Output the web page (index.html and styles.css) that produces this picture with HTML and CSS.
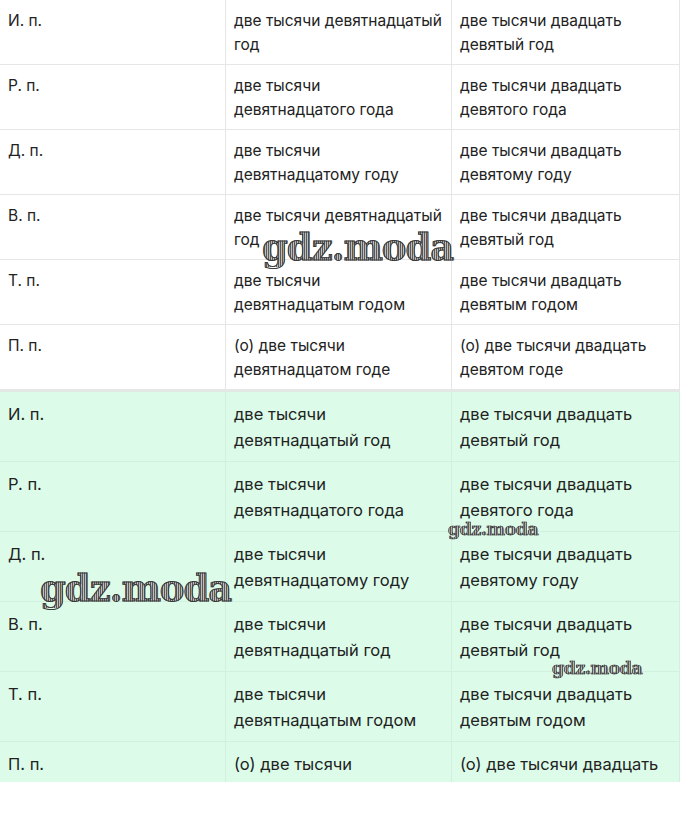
FILE: index.html
```html
<!DOCTYPE html>
<html lang="ru">
<head>
<meta charset="utf-8">
<link rel="stylesheet" href="styles.css">
</head>
<body>
<div class="page">
  <table class="grid plain">
    <tr><td>И. п.</td><td>две тысячи девятнадцатый год</td><td>две тысячи двадцать девятый год</td></tr>
    <tr><td>Р. п.</td><td>две тысячи девятнадцатого года</td><td>две тысячи двадцать девятого года</td></tr>
    <tr><td>Д. п.</td><td>две тысячи девятнадцатому году</td><td>две тысячи двадцать девятому году</td></tr>
    <tr><td>В. п.</td><td>две тысячи девятнадцатый год</td><td>две тысячи двадцать девятый год</td></tr>
    <tr><td>Т. п.</td><td>две тысячи девятнадцатым годом</td><td>две тысячи двадцать девятым годом</td></tr>
    <tr><td>П. п.</td><td>(о) две тысячи девятнадцатом годе</td><td>(о) две тысячи двадцать девятом годе</td></tr>
  </table>
  <table class="grid green">
    <tr><td>И. п.</td><td>две тысячи девятнадцатый год</td><td>две тысячи двадцать девятый год</td></tr>
    <tr><td>Р. п.</td><td>две тысячи девятнадцатого года</td><td>две тысячи двадцать девятого года</td></tr>
    <tr><td>Д. п.</td><td>две тысячи девятнадцатому году</td><td>две тысячи двадцать девятому году</td></tr>
    <tr><td>В. п.</td><td>две тысячи девятнадцатый год</td><td>две тысячи двадцать девятый год</td></tr>
    <tr><td>Т. п.</td><td>две тысячи девятнадцатым годом</td><td>две тысячи двадцать девятым годом</td></tr>
    <tr><td>П. п.</td><td>(о) две тысячи девятнадцатом годе</td><td>(о) две тысячи двадцать девятом годе</td></tr>
  </table>
  <span class="wm wm-big wm-1">gdz.moda</span>
  <span class="wm wm-small wm-2">gdz.moda</span>
  <span class="wm wm-big wm-3">gdz.moda</span>
  <span class="wm wm-small wm-4">gdz.moda</span>
</div>
</body>
</html>
```

FILE: styles.css
```css
html, body {
  margin: 0;
  padding: 0;
  background: #ffffff;
}

.page {
  position: relative;
  width: 680px;
  height: 782px;
  overflow: hidden;
  font-family: Inter, "Noto Sans", sans-serif;
  color: #222222;
}

.grid {
  width: 680px;
  border-collapse: collapse;
  table-layout: fixed;
}

.grid td {
  vertical-align: top;
  text-align: left;
  padding: 9px 8px 7px 8px;
  border: 1px solid #e6e6e6;
}

.grid td:nth-child(1) { width: 209px; }
.grid td:nth-child(2) { width: 209px; }

.plain td {
  font-size: 15.5px;
  line-height: 24px;
  height: 48px;
}

.plain tr:first-child td { border-top: none; }

.green {
  background: #dcfce9;
}

.green td {
  font-size: 16.5px;
  line-height: 26px;
  height: 52px;
  padding: 9px 8px 8px 8px;
  border-color: #d2f0df;
}

.green tr:first-child td { border-top: 2px solid #e3e8e5; }

.plain td:first-child, .green td:first-child { border-left: none; }

.wm {
  position: absolute;
  font-family: "DejaVu Serif", "Liberation Serif", serif;
  font-weight: bold;
  white-space: nowrap;
  color: transparent;
  background: repeating-linear-gradient(90deg, #5a5a5a 0 1px, #bdbdbd 1px 2px);
  -webkit-background-clip: text;
  background-clip: text;
  -webkit-text-stroke: 1px #3a3a3a;
  letter-spacing: -1px;
}

.wm-big { font-size: 37px; line-height: 40px; }
.wm-small { font-size: 17.5px; line-height: 20px; letter-spacing: -0.5px; -webkit-text-stroke: 0.6px #3a3a3a; }

.wm-1 { left: 262px; top: 227px; }
.wm-2 { left: 448px; top: 519px; }
.wm-3 { left: 40px; top: 568px; }
.wm-4 { left: 552px; top: 658px; }
```
